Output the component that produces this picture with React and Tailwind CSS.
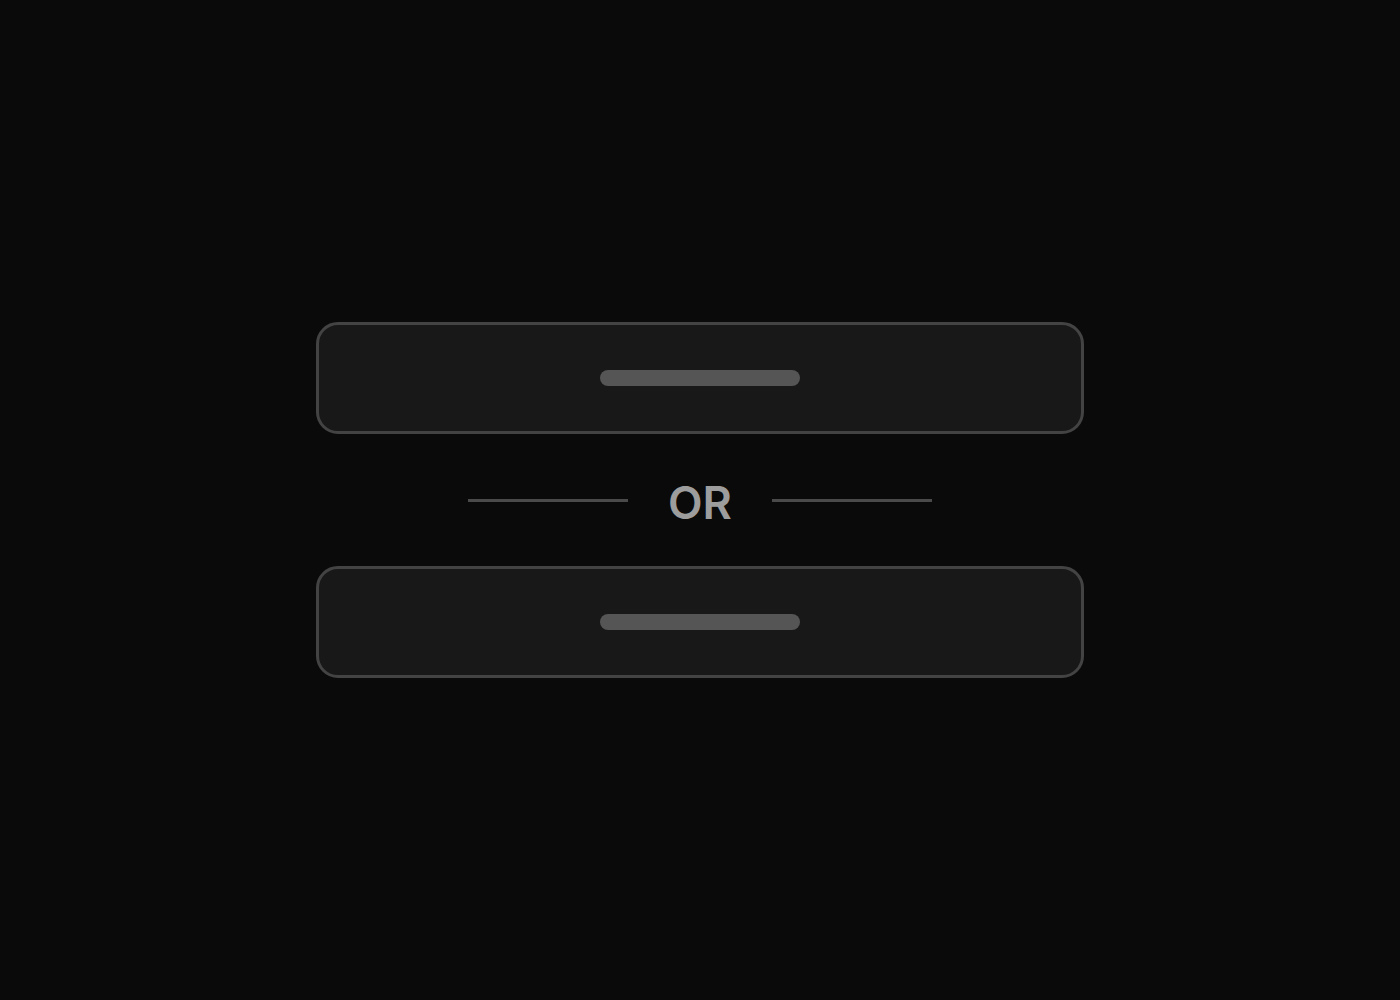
import React from 'react';

// Placeholder button with a skeleton label bar
const GhostButton = () => (
  <button className="w-[768px] h-[112px] rounded-[22px] border-[3px] border-[#434343] bg-[#181818] flex items-center justify-center">
    <span className="block w-[200px] h-4 rounded-full bg-[#555555]" />
  </button>
);

const Divider = () => (
  <div className="h-[132px] flex items-center justify-center gap-[41px]">
    <span className="block w-[160px] h-[3px] bg-[#4a4a4a]" />
    <span className="w-[62px] flex justify-center text-[45px] leading-none font-semibold text-[#9d9d9d] font-['Inter',sans-serif] translate-y-[2px]">
      OR
    </span>
    <span className="block w-[160px] h-[3px] bg-[#4a4a4a]" />
  </div>
);

const App = () => {
  return (
    <div className="min-h-screen bg-[#0a0a0a] flex flex-col items-center justify-center">
      <GhostButton />
      <Divider />
      <GhostButton />
    </div>
  );
};

export default App;
